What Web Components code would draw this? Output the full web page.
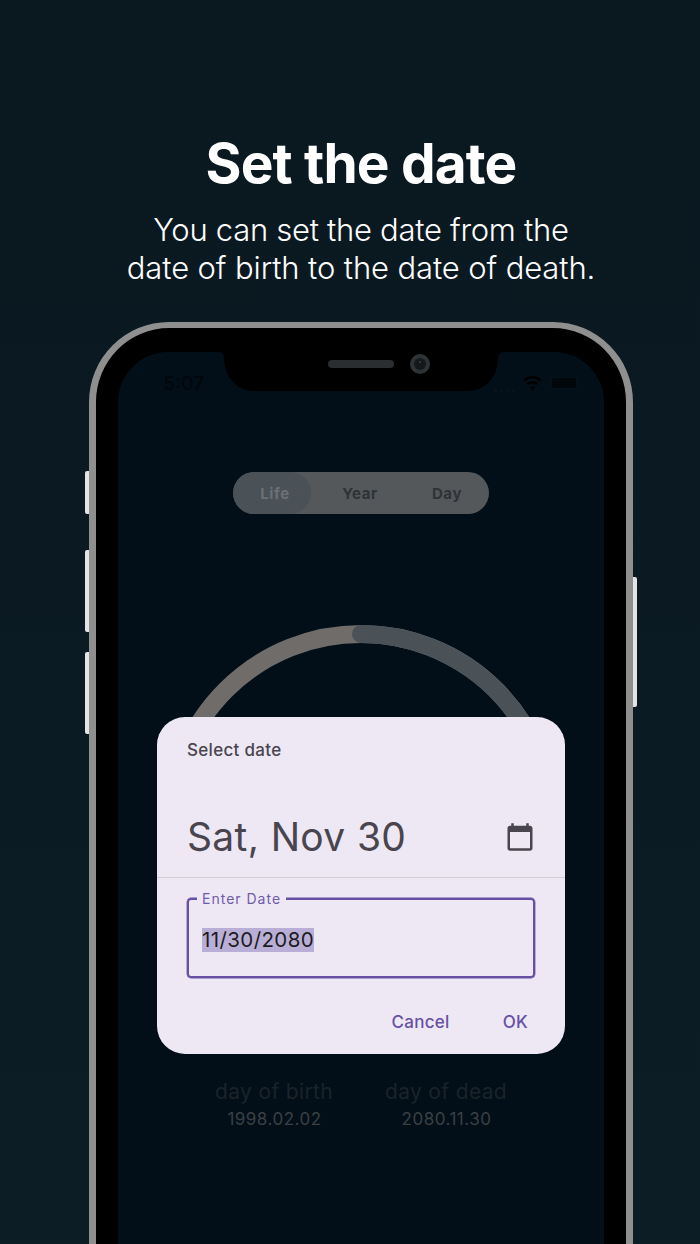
<!DOCTYPE html>
<html>
<head>
<meta charset="utf-8">
<title>Set the date</title>
<style>
  html, body { margin: 0; height: 1244px; overflow: hidden; }
  body {
    background: linear-gradient(180deg, #0a1820 0%, #0b1a22 40%, #0c1d25 100%);
    font-family: Inter, "Noto Sans", sans-serif;
  }
</style>
</head>
<body>
<promo-header title="Set the date">
  <span style="letter-spacing:-.29px">You can set the date from the</span><br>date of birth to the date of death.
</promo-header>

<phone-frame>
  <status-bar slot="status" time="5:07"></status-bar>
  <segment-toggle></segment-toggle>
  <life-arc></life-arc>
  <div class="stats" style="display:flex;justify-content:center;padding-right:2px;">
    <date-stat label="day of birth" value="1998.02.02"></date-stat>
    <date-stat label="day of dead" value="2080.11.30"></date-stat>
  </div>
  <date-dialog slot="overlay"></date-dialog>
</phone-frame>

<script>
class PromoHeader extends HTMLElement {
  constructor() {
    super();
    this.attachShadow({ mode: "open" });
    this.shadowRoot.innerHTML = `
      <style>
        :host { display: block; padding: 129px 0 0 22px; height: 193px; text-align: center; color: #fff; }
        h1 { margin: 0; font-size: 55px; line-height: 68px; font-weight: 700; letter-spacing: -0.85px; }
        p { margin: 0; padding-top: 14px; font-size: 31px; line-height: 38px; font-weight: 300; letter-spacing: -0.12px; }
      </style>
      <h1></h1>
      <p><slot></slot></p>
    `;
  }
  connectedCallback() {
    this.shadowRoot.querySelector("h1").textContent = this.getAttribute("title");
  }
}

class PhoneFrame extends HTMLElement {
  constructor() {
    super();
    this.attachShadow({ mode: "open" });
    this.shadowRoot.innerHTML = `
      <style>
        :host { display: block; position: relative; width: 544px; height: 1000px; margin-left: 89px; }
        .body {
          box-sizing: border-box; height: 100%; padding: 24px 22px 0;
          background: #000; border: 6px solid #8f8f8f; border-radius: 80px;
          border-left-width: 7px; border-right-width: 7px;
        }
        .screen { position: relative; height: 900px; background: #020f18; border-radius: 50px 50px 0 0; }
        .btn { position: absolute; width: 4px; background: #e4e4e4; }
        .l { left: -4px; border-radius: 2px 0 0 2px; }
        .r { right: -4px; border-radius: 0 2px 2px 0; }
        .notch { position: absolute; left: 100px; top: 0; width: 286px; height: 39px; }
        .overlay { position: absolute; left: 39px; top: 365px; }
      </style>
      <span class="btn l" style="top:149px;height:43px"></span>
      <span class="btn l" style="top:228px;height:82px"></span>
      <span class="btn l" style="top:330px;height:82px"></span>
      <span class="btn r" style="top:255px;height:130px"></span>
      <div class="body">
        <div class="screen">
          <slot name="status"></slot>
          <svg class="notch" viewBox="0 0 286 39">
            <path fill="#000" d="M0 0Q6 0 6 6C6 26 20 39 36 39H250C266 39 280 26 280 6Q280 0 286 0Z"/>
            <rect x="110" y="8" width="66" height="8" rx="4" fill="#2a2e30"/>
            <circle cx="202" cy="12" r="10" fill="#2e3336"/>
            <circle cx="202" cy="12" r="6" fill="#14181a"/>
            <circle cx="202" cy="10" r="1" fill="#3c4246"/>
          </svg>
          <slot></slot>
          <div class="overlay"><slot name="overlay"></slot></div>
        </div>
      </div>
    `;
  }
}

class StatusBar extends HTMLElement {
  constructor() {
    super();
    this.attachShadow({ mode: "open" });
    this.shadowRoot.innerHTML = `
      <style>
        :host { display: flex; align-items: center; height: 62px; padding: 0 27px 0 45px; box-sizing: border-box; color: #01070c; }
        .time { font-size: 19px; font-weight: 600; flex: 1; }
        .dots { display: flex; gap: 3px; margin: 14px 8px 0 0; }
        .dots i { width: 3px; height: 3px; border-radius: 50%; background: #0a151c; }
        svg { display: block; }
        .bat { flex: none; width: 26px; height: 12px; box-sizing: border-box; margin-left: 9px; background: #01060a; border: 1px solid #06121a; border-radius: 3px; }
      </style>
      <span class="time"></span>
      <span class="dots"><i></i><i></i><i></i><i></i></span>
      <svg width="19" height="15" viewBox="0 0 19 15" fill="#000">
        <path d="M9.5 0C6 0 2.8 1.3.4 3.6l1.7 1.8C4 3.5 6.6 2.4 9.5 2.4s5.5 1.1 7.4 3l1.7-1.8C16.2 1.3 13 0 9.5 0z"/>
        <path d="M9.5 5C7.4 5 5.4 5.8 3.9 7.2l1.7 1.8c1-1 2.4-1.6 3.9-1.6s2.9.6 3.9 1.6l1.7-1.8C13.6 5.8 11.6 5 9.5 5z"/>
        <path d="M9.5 10c-1 0-1.9.4-2.5.9L9.5 15l2.5-4.1c-.6-.5-1.5-.9-2.5-.9z"/>
      </svg>
      <span class="bat"></span>
    `;
  }
  connectedCallback() {
    this.shadowRoot.querySelector(".time").textContent = this.getAttribute("time");
  }
}

class SegmentToggle extends HTMLElement {
  constructor() {
    super();
    this.attachShadow({ mode: "open" });
    this.shadowRoot.innerHTML = `
      <style>
        :host { display: flex; width: 256px; height: 42px; margin: 58px auto 0; background: #55585a; border-radius: 21px; overflow: hidden;
          font-size: 15px; font-weight: 700; color: #2f3236; letter-spacing: .6px; }
        span { display: flex; align-items: center; justify-content: center; }
        .on { width: 78px; background: #4a5157; color: #6b7075; border-radius: 21px; padding-left: 6px; box-sizing: border-box; }
        .mid { width: 98px; }
        .end { width: 76px; }
      </style>
      <span class="on">Life</span>
      <span class="mid">Year</span>
      <span class="end">Day</span>
    `;
  }
}

class LifeArc extends HTMLElement {
  constructor() {
    super();
    this.attachShadow({ mode: "open" });
    this.shadowRoot.innerHTML = `
      <style>
        :host { display: block; height: 453px; margin-top: 111px; }
        svg { display: block; margin: 0 auto; }
      </style>
      <svg width="400" height="400" viewBox="0 0 400 400" fill="none" stroke-width="18">
        <circle cx="200" cy="200" r="191" stroke="#6f6c6a"/>
        <path d="M200 9A191 191 0 1 1 199 9" stroke="#4a5258" stroke-linecap="round" pathLength="100" stroke-dasharray="76 100"/>
      </svg>
    `;
  }
}

class DateStat extends HTMLElement {
  constructor() {
    super();
    this.attachShadow({ mode: "open" });
    this.shadowRoot.innerHTML = `
      <style>
        :host { display: flex; flex-direction: column; align-items: center; width: 172px; }
        .label { font-size: 21px; line-height: 27px; color: #1a2329; letter-spacing: .35px; }
        .value { font-size: 17px; line-height: 29px; color: #3a4044; letter-spacing: .5px; margin-left: 1px; }
      </style>
      <span class="label"></span>
      <span class="value"></span>
    `;
  }
  connectedCallback() {
    this.shadowRoot.querySelector(".label").textContent = this.getAttribute("label");
    this.shadowRoot.querySelector(".value").textContent = this.getAttribute("value");
  }
}

class DateDialog extends HTMLElement {
  constructor() {
    super();
    this.attachShadow({ mode: "open" });
    this.shadowRoot.innerHTML = `
      <style>
        :host { display: block; width: 408px; height: 337px; background: #eee8f4; border-radius: 28px; color: #49454f; overflow: hidden; }
        .top { height: 161px; box-sizing: border-box; padding: 23px 30px 0; border-bottom: 1px solid #d2ced6; }
        .small { font-size: 17px; line-height: 21px; font-weight: 500; letter-spacing: .3px; }
        .row { display: flex; justify-content: space-between; align-items: center; margin-top: 51px; }
        .big { font-size: 39px; line-height: 50px; font-weight: 400; letter-spacing: .35px; }
        .row svg { display: block; }
        .field { position: relative; box-sizing: border-box; height: 80px; margin: 20px 30px 0; border: 2px solid #6750a4; box-shadow: 0 0 0 .4px #6750a4; border-radius: 4px; padding: 28px 13px 0; }
        .field label { position: absolute; left: 8px; top: -9px; padding: 0 5px; background: #eee8f4; font-size: 14px; line-height: 16px; color: #6f5bab; letter-spacing: 1px; }
        .val { display: inline-block; height: 24px; line-height: 24px; font-size: 20.5px; background: #b9afd6; color: #1d1b20; letter-spacing: .4px; }
        .actions { display: flex; justify-content: flex-end; gap: 53px; padding: 34px 37px 0 0; font-size: 17px; font-weight: 500; line-height: 20px; color: #6750a4; letter-spacing: .3px; }
      </style>
      <div class="top">
        <div class="small">Select date</div>
        <div class="row">
          <span class="big">Sat, Nov 30</span>
          <svg width="30" height="30" viewBox="0 0 24 24" fill="#49454f"><path d="M20 3h-1V1h-2v2H7V1H5v2H4c-1.1 0-2 .9-2 2v16c0 1.1.9 2 2 2h16c1.1 0 2-.9 2-2V5c0-1.1-.9-2-2-2zm0 18H4V8h16v13z"/></svg>
        </div>
      </div>
      <div class="field">
        <label>Enter Date</label>
        <span class="val">11/30/2080</span>
      </div>
      <div class="actions"><span>Cancel</span><span>OK</span></div>
    `;
  }
}

customElements.define("promo-header", PromoHeader);
customElements.define("phone-frame", PhoneFrame);
customElements.define("status-bar", StatusBar);
customElements.define("segment-toggle", SegmentToggle);
customElements.define("life-arc", LifeArc);
customElements.define("date-stat", DateStat);
customElements.define("date-dialog", DateDialog);
</script>
</body>
</html>
